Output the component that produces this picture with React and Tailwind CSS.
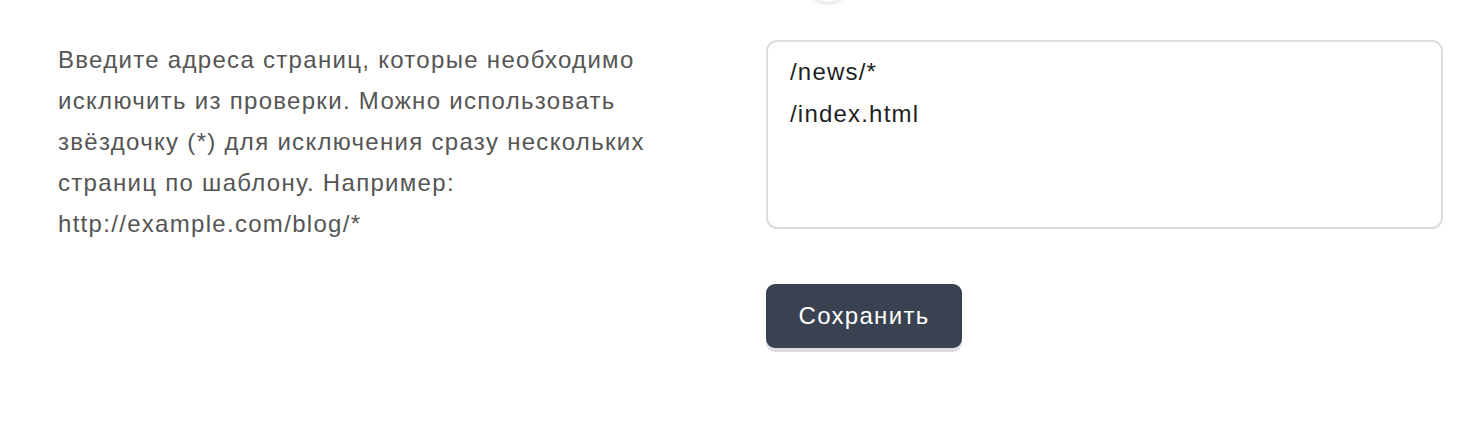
export default function App() {
  return (
    <div className="w-[1484px] h-[438px] bg-white overflow-hidden" style={{ fontFamily: '"Liberation Sans", Arial, sans-serif' }}>
      {/* partial control from the row above */}
      <div className="flex h-0 pl-[806px]">
        <div className="w-[44px] h-[44px] -mt-[42px] rounded-full bg-white shadow-[0_2px_4px_rgba(0,0,0,0.12)]" />
      </div>

      <div className="flex pt-[40px] pl-[58px] pr-[41px]">
        <div className="w-[708px] shrink-0 -mt-[1px]">
          <p className="w-[640px] text-[24px] leading-[41px] tracking-[1.3px] text-[#555555]">
            Введите адреса страниц, которые необходимо исключить из проверки. Можно использовать звёздочку (*) для исключения сразу нескольких страниц по шаблону. Например: http://example.com/blog/*
          </p>
        </div>

        <div className="flex-1 flex flex-col items-start">
          <textarea
            className="w-full h-[189px] resize-none border-2 border-[#dcdcdc] rounded-[11px] px-[22px] pt-[9px] text-[24px] leading-[42px] tracking-[1.2px] text-[#1f1f1f] outline-none"
            defaultValue={'/news/*\n/index.html'}
          />
          <button className="mt-[55px] w-[196px] h-[64px] rounded-[9px] bg-[#3a4252] text-white text-[24px] tracking-[1.3px] shadow-[0_4px_0_#dcdde0]">
            Сохранить
          </button>
        </div>
      </div>
    </div>
  );
}
